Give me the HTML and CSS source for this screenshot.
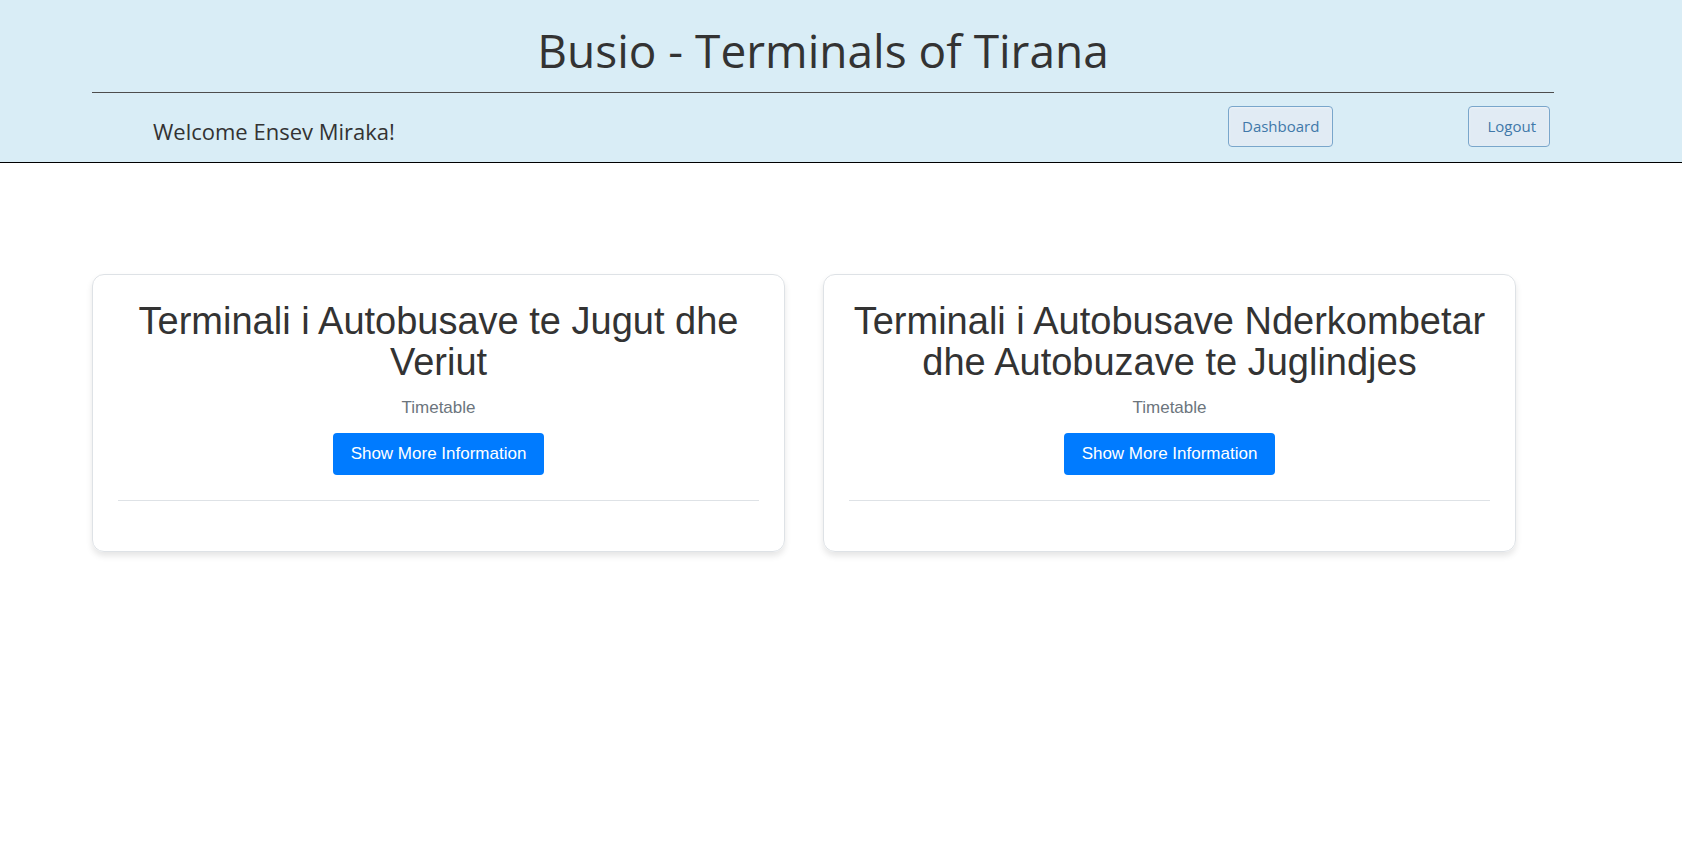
FILE: index.html
```html
<!DOCTYPE html>
<html lang="sq">
<head>
<meta charset="utf-8">
<meta name="viewport" content="width=device-width, initial-scale=1">
<title>Busio - Terminals of Tirana</title>
<link rel="stylesheet" href="styles.css">
</head>
<body>
<header class="header">
  <div class="container">
    <h1 class="title">Busio - Terminals of Tirana</h1>
    <nav class="toolbar">
      <p class="welcome">Welcome Ensev Miraka!</p>
      <a class="nav-button" href="#dashboard">Dashboard</a>
      <a class="nav-button logout" href="#logout">Logout</a>
    </nav>
  </div>
</header>
<main class="container terminals">
  <article class="card">
    <h2 class="card-title">Terminali i Autobusave te Jugut dhe Veriut</h2>
    <p class="card-subtitle">Timetable</p>
    <button class="more" type="button">Show More Information</button>
    <hr class="divider">
  </article>
  <article class="card">
    <h2 class="card-title">Terminali i Autobusave Nderkombetar dhe Autobuzave te Juglindjes</h2>
    <p class="card-subtitle">Timetable</p>
    <button class="more" type="button">Show More Information</button>
    <hr class="divider">
  </article>
</main>
</body>
</html>
```

FILE: styles.css
```css
* {
  box-sizing: border-box;
}

body {
  min-height: 100vh;
  margin: 0;
  background: #fff;
  color: #333;
  font-family: Arial, "Liberation Sans", sans-serif;
  font-size: 17px;
}

.container {
  padding: 0 128px 0 92px;
}

.header {
  background: #d9edf6;
  border-bottom: 1px solid #000;
}

.title {
  margin: 0;
  padding: 20px 0 12px;
  border-bottom: 1px solid #4d4d4d;
  font: 400 46px/60px "Comic Sans MS", "Open Sans", sans-serif;
  text-align: center;
}

.toolbar {
  display: flex;
  align-items: center;
  padding: 13px 4px 15px 61px;
}

.welcome {
  flex: 1;
  margin: 0;
  padding-top: 9px;
  font: 400 22px/32px "Comic Sans MS", "Open Sans", sans-serif;
}

.nav-button {
  padding: 8px 13px;
  border: 1px solid #79a6cb;
  border-radius: 4px;
  background: #e1ebf4;
  box-shadow: inset 0 1px 2px #eef3f8;
  color: #4078a9;
  font: 400 15px/23px "Segoe UI", "Open Sans", sans-serif;
  text-decoration: none;
}

.logout {
  margin-left: 135px;
  padding-left: 18px;
}

.terminals {
  display: grid;
  grid-template-columns: 1fr 1fr;
  margin-top: 111px;
  padding-bottom: 40px;
}

.card {
  margin-right: 38px;
  padding: 26px 25px 25px;
  border: 1px solid #dee2e6;
  border-radius: 12px;
  box-shadow: 0 4px 6px rgba(0, 0, 0, 0.1);
  text-align: center;
}

.card-title {
  margin: 0 0 12px;
  font-size: 38px;
  font-weight: 400;
  line-height: 41px;
}

.card-subtitle {
  margin: 0 0 12px;
  color: #6c757d;
  line-height: 26px;
}

.more {
  padding: 8px 18px;
  border: 0;
  border-radius: 4px;
  background: #007bff;
  color: #fff;
  font: inherit;
  line-height: 26px;
}

.divider {
  height: 1px;
  margin: 25px 0;
  border: 0;
  background: #dee2e6;
}
```
